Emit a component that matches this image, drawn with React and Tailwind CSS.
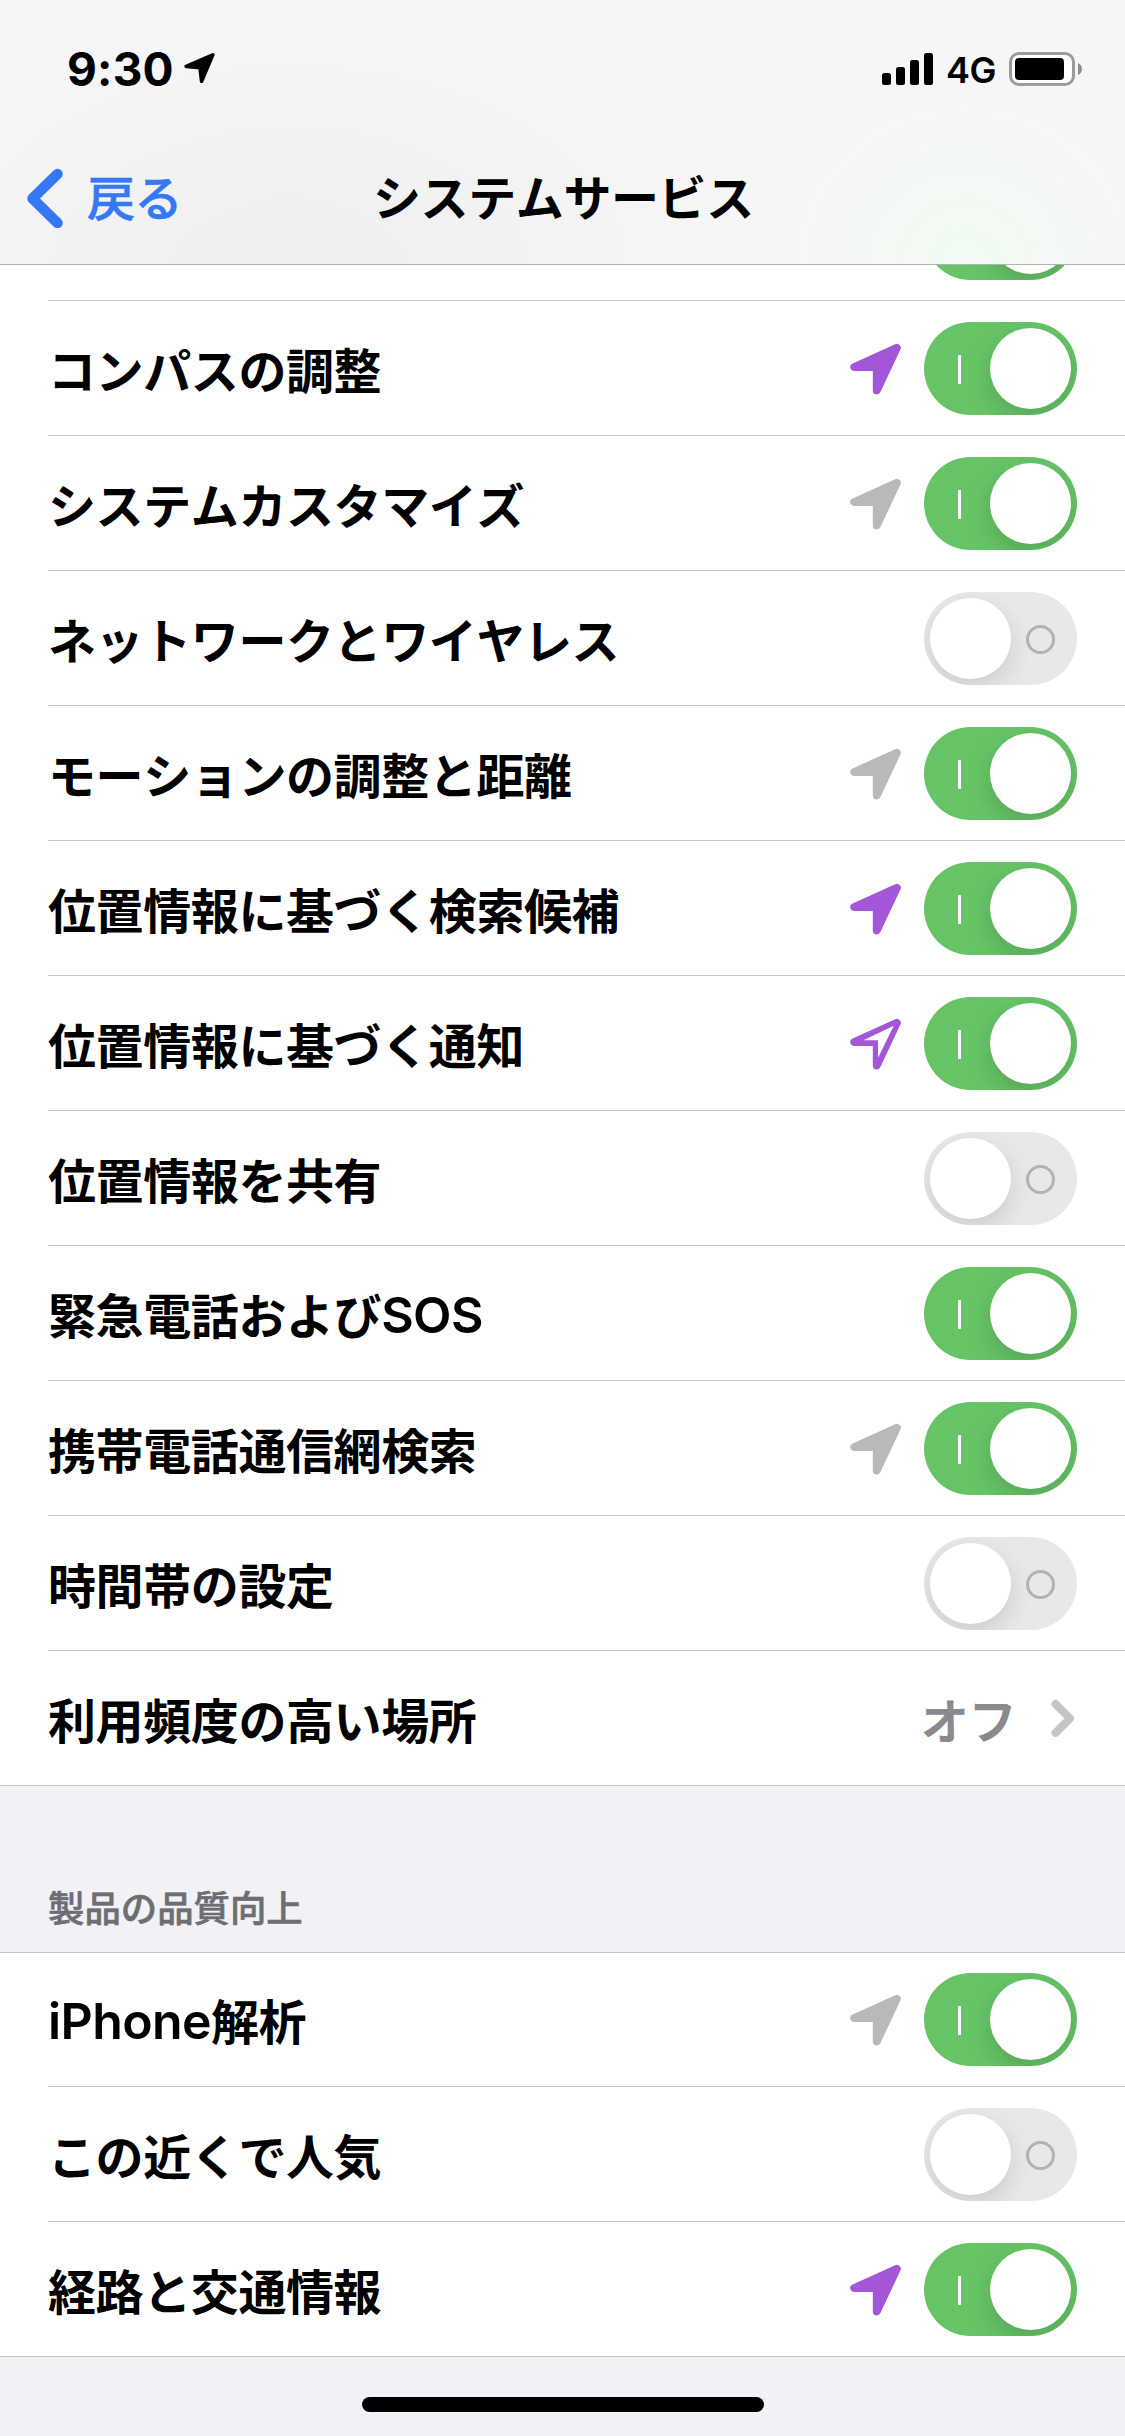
const CJK = "font-['Inter','Noto_Sans_CJK_JP',sans-serif]";

const services = [
  { label: "コンパスの調整", on: true, arrow: "purple" },
  { label: "システムカスタマイズ", on: true, arrow: "gray" },
  { label: "ネットワークとワイヤレス", on: false },
  { label: "モーションの調整と距離", on: true, arrow: "gray" },
  { label: "位置情報に基づく検索候補", on: true, arrow: "purple" },
  { label: "位置情報に基づく通知", on: true, arrow: "outline" },
  { label: "位置情報を共有", on: false },
  { label: "緊急電話および", latinAfter: "SOS", on: true },
  { label: "携帯電話通信網検索", on: true, arrow: "gray" },
  { label: "時間帯の設定", on: false },
  { label: "利用頻度の高い場所", value: "オフ" },
];

const improvements = [
  { latinBefore: "iPhone", label: "解析", on: true, arrow: "gray" },
  { label: "この近くで人気", on: false },
  { label: "経路と交通情報", on: true, arrow: "purple" },
];

function LocationArrow({ kind }) {
  const color = kind === "gray" ? "#b9b9bb" : "#a356d8";
  return (
    <svg width="52" height="52" viewBox="0 0 52 52" className="shrink-0">
      <path
        d="M46.8 4.8 L4.3 24.1 H26.8 V47.4 Z"
        fill={color}
        stroke={color}
        strokeWidth="8"
        strokeLinejoin="round"
      />
      {kind === "outline" && <path d="M43.8 7.8 L13.4 22.3 H28.1 V39.8 Z" fill="#fff" />}
    </svg>
  );
}

function Toggle({ on }) {
  if (on) {
    return (
      <div className="flex h-[93px] w-[153px] shrink-0 items-center justify-between overflow-hidden rounded-full bg-[#66c466] pl-[34px] pr-[6px]">
        <span className="mt-[2px] h-[29px] w-[3px] bg-white" />
        <span className="size-[81px] rounded-full bg-white shadow-[0_9px_24px_rgba(0,0,0,0.15)]" />
      </div>
    );
  }
  return (
    <div className="flex h-[93px] w-[153px] shrink-0 items-center justify-between overflow-hidden rounded-full bg-[#e8e8e9] pl-[6px] pr-[22px]">
      <span className="size-[81px] rounded-full bg-white shadow-[0_9px_24px_rgba(0,0,0,0.12)]" />
      <span className="mt-[2px] size-[29px] rounded-full border-[3px] border-[#b2b2b3]" />
    </div>
  );
}

function Latin({ children }) {
  return (
    <span className="align-[1px] text-[50px] font-semibold leading-[50px] tracking-[-0.6px]">
      {children}
    </span>
  );
}

function Row({ item, last }) {
  return (
    <div className="relative flex h-[135px] items-center pb-px pl-[48px] pr-[48px]">
      <div className="flex-1 pt-[8px] text-[48px] font-bold leading-[60px] tracking-[-0.4px] whitespace-nowrap text-black">
        {item.latinBefore && <Latin>{item.latinBefore}</Latin>}
        {item.label}
        {item.latinAfter && <Latin>{item.latinAfter}</Latin>}
      </div>
      {item.arrow && (
        <div className="mr-[22px] pt-px">
          <LocationArrow kind={item.arrow} />
        </div>
      )}
      {item.value ? (
        <div className="flex items-center">
          <span className="mr-[35px] pt-[8px] text-[48px] font-bold leading-[60px] tracking-[-0.4px] text-[#8a8a8e]">
            {item.value}
          </span>
          <svg width="26" height="40" viewBox="0 0 26 40">
            <path
              d="M4.5 6 L19 20.3 L4.5 34.8"
              fill="none"
              stroke="#c5c5c7"
              strokeWidth="8"
              strokeLinecap="round"
              strokeLinejoin="round"
            />
          </svg>
        </div>
      ) : (
        <Toggle on={item.on} />
      )}
      <div
        className={
          last
            ? "absolute bottom-0 left-0 right-0 h-px bg-[#c2c2c5]"
            : "absolute bottom-0 left-[48px] right-0 h-px bg-[#c6c6c8]"
        }
      />
    </div>
  );
}

function StatusBar() {
  return (
    <div className="flex h-[132px] items-start justify-between pl-[67px] pr-[42px] pt-[42px]">
      <div className="flex items-start">
        <span className="text-[46px] font-bold leading-[54px] tracking-[0.2px]">9:30</span>
        <svg width="32" height="32" viewBox="0 0 32 32" className="ml-[9px] mt-[10px]">
          <path
            d="M29.8 2.8 L3.2 14.4 L17 15.6 L18.6 29.2 Z"
            stroke="#000"
            strokeWidth="3.6"
            strokeLinejoin="round"
          />
        </svg>
      </div>
      <div className="flex items-start">
        <svg width="51" height="32" viewBox="0 0 51 32" className="mt-[11px]">
          <rect x="0" y="20" width="9" height="12" rx="2.5" />
          <rect x="14" y="14" width="9" height="18" rx="2.5" />
          <rect x="28" y="7" width="9" height="25" rx="2.5" />
          <rect x="42" y="0" width="9" height="32" rx="2.5" />
        </svg>
        <span className="ml-[13px] mt-[8px] w-[63px] text-[36px] font-semibold leading-[40px] tracking-[-0.4px]">4G</span>
        <svg width="74" height="34" viewBox="0 0 74 34" className="mt-[10px]">
          <rect x="1.5" y="1.5" width="63" height="31" rx="8.5" fill="#fff" stroke="#9b9b9b" strokeWidth="3" />
          <rect x="6" y="6" width="49" height="22" rx="4" />
          <path d="M69 11 Q73 13 73 17 Q73 21 69 23 Z" fill="#8f8f8f" />
        </svg>
      </div>
    </div>
  );
}

function Header() {
  return (
    <header className="relative z-10 h-[265px] border-b border-[#b2b2b4] bg-[#f6f6f6] bg-[radial-gradient(ellipse_180px_170px_at_965px_265px,#f0fbf1_0%,transparent_100%),radial-gradient(ellipse_420px_260px_at_290px_275px,#eeeeee_0%,transparent_100%)]">
      <StatusBar />
      <div className="grid grid-cols-3 items-center pt-[35px]">
        <div className="flex items-center pl-[26px] text-[#3478f6]">
          <svg width="38" height="60" viewBox="0 0 38 60">
            <path
              d="M31.5 6 L6.5 30.5 L31.5 55"
              fill="none"
              stroke="currentColor"
              strokeWidth="10.5"
              strokeLinecap="round"
              strokeLinejoin="round"
            />
          </svg>
          <span className="ml-[23px] pt-[2px] text-[48px] font-medium leading-[60px] tracking-[-0.4px] [-webkit-text-stroke:0.7px]">
            戻る
          </span>
        </div>
        <h1 className="-ml-[2px] pt-[2px] text-center text-[48px] font-bold leading-[60px] tracking-[-0.4px] whitespace-nowrap">
          システムサービス
        </h1>
      </div>
    </header>
  );
}

export default function App() {
  return (
    <div
      lang="ja"
      className={"h-[2436px] w-[1125px] overflow-hidden bg-[#f2f1f6] text-black [font-kerning:none] " + CJK}
    >
      <Header />
      <main>
        <section className="-mt-[99px] bg-white">
          <Row item={{ label: "", on: true }} />
          {services.map((item, i) => (
            <Row key={item.label} item={item} last={i === services.length - 1} />
          ))}
        </section>
        <h2 className="flex h-[166px] items-end pb-[16px] pl-[48px] text-[36.4px] font-medium leading-[54px] text-[#6d6d72] [-webkit-text-stroke:0.6px]">
          製品の品質向上
        </h2>
        <section className="bg-white shadow-[inset_0_1px_0_#c2c2c5]">
          {improvements.map((item, i) => (
            <Row key={item.label} item={item} last={i === improvements.length - 1} />
          ))}
        </section>
      </main>
      <div className="mx-auto mt-[40px] h-[15px] w-[402px] rounded-full bg-black" />
    </div>
  );
}
